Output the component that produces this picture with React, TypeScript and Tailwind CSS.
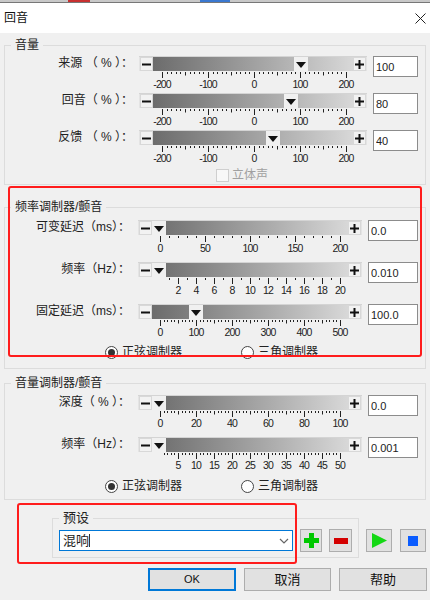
const fontStack = "font-['Liberation_Sans','Noto_Sans_CJK_SC',sans-serif]";

type RulerType = {
  x: number;
  gap: number;
  n: number;
  every: number;
  phase?: number;
  mid?: number;
  labels: string[];
  labelLeft: number;
  labelWidth: number;
};

function Ruler({ x, gap, n, every, phase = 0, mid, labels, labelLeft, labelWidth }: RulerType) {
  const ticks = [];
  for (let i = 0; i <= n; i++) {
    const major = i % every === phase;
    const medium = mid !== undefined && i % every === mid;
    const px = Math.round(x + i * gap) + 0.5;
    ticks.push(
      <line key={i} x1={px} x2={px} y1={0} y2={major ? 6 : medium ? 3.5 : 2} stroke="#222" strokeWidth="1" />
    );
  }

  return (
    <div>
      <svg className="block mt-[1px]" width="230" height="6">
        {ticks}
      </svg>
      <div
        className="flex justify-between text-[10.5px] leading-[12px] tracking-[-0.9px] text-[#222]"
        style={{ marginLeft: labelLeft, width: labelWidth }}
      >
        {labels.map((label) => (
          <span key={label} className="w-0 flex justify-center whitespace-nowrap">
            {label}
          </span>
        ))}
      </div>
    </div>
  );
}

function SliderButton({ plus }: { plus?: boolean }) {
  return (
    <div className="w-[13px] h-[14px] bg-[#f2f2f2] border border-[#d8d8d8] flex items-center justify-center shrink-0">
      <svg width="9" height="9" viewBox="0 0 9 9">
        <rect x="0" y="3.5" width="9" height="2" fill="#111" />
        {plus && <rect x="3.5" y="0" width="2" height="9" fill="#111" />}
      </svg>
    </div>
  );
}

function SliderRow({
  label,
  value,
  thumb,
  ruler,
  rowClass,
  labelClass,
  sliderClass,
  inputClass,
}: {
  label: string;
  value: string;
  thumb: number;
  ruler: RulerType;
  rowClass: string;
  labelClass: string;
  sliderClass: string;
  inputClass: string;
}) {
  return (
    <div className={`flex items-start ${rowClass}`}>
      <div className={`text-right text-[12px] leading-[15px] whitespace-pre text-[#222] shrink-0 ${labelClass}`}>
        {label}
      </div>
      <div className={`shrink-0 ${sliderClass}`}>
        <div className="relative h-[15px] flex items-center px-[1px] bg-[#e4e4e4] border-t border-[#d4d4d4]">
          <SliderButton />
          <div className="h-[14px] flex-1 bg-gradient-to-r from-[#6c6c6c] to-[#d8d8d8]" />
          <SliderButton plus />
          <div
            className="absolute top-0 w-[14px] h-[15px] bg-[#f0f0f0] flex items-center justify-center"
            style={{ left: thumb }}
          >
            <svg width="10" height="6" viewBox="0 0 10 6">
              <path d="M0 0 H10 L5 6 Z" fill="#111" />
            </svg>
          </div>
        </div>
        <Ruler {...ruler} />
      </div>
      <input
        readOnly
        value={value}
        className={`h-[21px] bg-white border border-[#8c8c8c] pl-[2px] text-[11px] text-[#222] outline-none shrink-0 ${inputClass}`}
      />
    </div>
  );
}

function Radio({ checked, text, className }: { checked?: boolean; text: string; className: string }) {
  return (
    <div className={`flex items-center gap-[4px] text-[12px] leading-[13px] text-[#222] ${className}`}>
      <span className="w-[13px] h-[13px] rounded-full border border-[#444] bg-white flex items-center justify-center shrink-0">
        {checked && <span className="w-[7px] h-[7px] rounded-full bg-[#333]" />}
      </span>
      {text}
    </div>
  );
}

function Group({ title, className, children }: { title: string; className: string; children: React.ReactNode }) {
  return (
    <fieldset className={`border border-[#dcdcdc] min-w-0 ${className}`}>
      <legend className="ml-[6px] px-[4px] text-[12px] leading-[18px] text-[#222]">{title}</legend>
      {children}
    </fieldset>
  );
}

function IconButton({ className, children }: { className: string; children: React.ReactNode }) {
  return (
    <div className={`h-[23px] bg-[#e1e1e1] border border-[#adadad] flex items-center justify-center shrink-0 ${className}`}>
      {children}
    </div>
  );
}

const percentLabels = ["-200", "-100", "0", "100", "200"];
const volumeRuler: RulerType = { x: 23, gap: 4.6, n: 40, every: 10, mid: 5, labels: percentLabels, labelLeft: 23, labelWidth: 184 };

export default function App() {
  return (
    <div className={`relative w-[430px] h-[600px] overflow-hidden bg-[#f0f0f0] ${fontStack}`}>
      {/* Window behind the dialog */}
      <div className="flex h-[3px] bg-[#c8c8c8] border-b border-[#777]">
        <div className="ml-[68px] w-[22px] bg-[#c83030]" />
        <div className="ml-[110px] w-[30px] bg-[#3a78d0]" />
      </div>

      {/* Title bar */}
      <div className="h-[30px] bg-white flex items-center justify-between pl-[4px] pr-[4px]">
        <span className="text-[12px] text-[#111]">回音</span>
        <svg width="11" height="11" viewBox="0 0 11 11">
          <path d="M0.5 0.5 L10.5 10.5 M10.5 0.5 L0.5 10.5" stroke="#222" strokeWidth="1" />
        </svg>
      </div>

      <div className="px-[4px] pt-[3px]">
        <Group title="音量" className="pt-[2px] pb-[2px]">
          <SliderRow label="来源 （ % ）：" value="100" thumb={155} ruler={volumeRuler} rowClass="h-[37px]" labelClass="w-[134px] pr-[6px]" sliderClass="w-[228px] mr-[6px]" inputClass="w-[45px]" />
          <SliderRow label="回音（ % ）：" value="80" thumb={145} ruler={volumeRuler} rowClass="h-[37px]" labelClass="w-[134px] pr-[6px]" sliderClass="w-[228px] mr-[6px]" inputClass="w-[45px]" />
          <SliderRow label="反馈 （ % ）：" value="40" thumb={127} ruler={volumeRuler} rowClass="h-[37px]" labelClass="w-[134px] pr-[6px]" sliderClass="w-[228px] mr-[6px]" inputClass="w-[45px]" />
          <div className="flex items-center gap-[3px] ml-[211px] mt-[2px] text-[12px] leading-[13px] text-[#a0a0a0]">
            <span className="w-[13px] h-[13px] bg-[#f8f8f8] border border-[#cfcfcf]" />
            立体声
          </div>
        </Group>

        <Group title="频率调制器/颤音" className="mt-[13px] pt-[4px] pb-[9px]">
          <SliderRow
            label="可变延迟（ms）："
            value="0.0"
            thumb={14}
            ruler={{ x: 22, gap: 9, n: 20, every: 5, labels: ["0", "50", "100", "150", "200"], labelLeft: 22, labelWidth: 180 }}
            rowClass="h-[42px]"
            labelClass="w-[133px] pr-[8px]"
            sliderClass="w-[224px] mr-[6px]"
            inputClass="w-[50px]"
          />
          <SliderRow
            label="频率（Hz）："
            value="0.010"
            thumb={14}
            ruler={{ x: 31, gap: 9, n: 19, every: 2, phase: 1, labels: ["2", "4", "6", "8", "10", "12", "14", "16", "18", "20"], labelLeft: 40, labelWidth: 162 }}
            rowClass="h-[42px]"
            labelClass="w-[133px] pr-[8px]"
            sliderClass="w-[224px] mr-[6px]"
            inputClass="w-[50px]"
          />
          <SliderRow
            label="固定延迟（ms）："
            value="100.0"
            thumb={51}
            ruler={{ x: 22, gap: 3.6, n: 50, every: 10, mid: 5, labels: ["0", "100", "200", "300", "400", "500"], labelLeft: 22, labelWidth: 180 }}
            rowClass="h-[42px]"
            labelClass="w-[133px] pr-[8px]"
            sliderClass="w-[224px] mr-[6px]"
            inputClass="w-[50px]"
          />
          <div className="flex">
            <Radio checked text="正弦调制器" className="ml-[100px] w-[136px]" />
            <Radio text="三角调制器" className="" />
          </div>
        </Group>

        <Group title="音量调制器/颤音" className="mt-[5px] pt-[3px] pb-[6px]">
          <SliderRow
            label="深度（ % ）："
            value="0.0"
            thumb={14}
            ruler={{ x: 22, gap: 3.6, n: 50, every: 10, mid: 5, labels: ["0", "20", "40", "60", "80", "100"], labelLeft: 22, labelWidth: 180 }}
            rowClass="h-[42px]"
            labelClass="w-[133px] pr-[8px]"
            sliderClass="w-[224px] mr-[6px]"
            inputClass="w-[50px]"
          />
          <SliderRow
            label="频率（Hz）："
            value="0.001"
            thumb={14}
            ruler={{ x: 25.6, gap: 3.6, n: 49, every: 5, phase: 4, labels: ["5", "10", "15", "20", "25", "30", "35", "40", "45", "50"], labelLeft: 40, labelWidth: 162 }}
            rowClass="h-[42px]"
            labelClass="w-[133px] pr-[8px]"
            sliderClass="w-[224px] mr-[6px]"
            inputClass="w-[50px]"
          />
          <div className="flex mt-[1px]">
            <Radio checked text="正弦调制器" className="ml-[100px] w-[136px]" />
            <Radio text="三角调制器" className="" />
          </div>
        </Group>

        {/* Presets */}
        <div className="flex items-start mt-[9px] pl-[48px]">
          <fieldset className="w-[308px] border border-[#dcdcdc] min-w-0 px-[6px] pt-[2px] pb-[5px]">
            <legend className="ml-[0px] px-[4px] text-[13px] leading-[18px] text-[#222]">预设</legend>
            <div className="flex items-center">
              <div className="w-[234px] h-[21px] bg-white border border-[#0078d7] flex items-center justify-between pl-[3px] pr-[3px] text-[13px] text-[#222]">
                <span className="flex items-center">
                  混响
                  <span className="w-[1px] h-[13px] bg-[#333]" />
                </span>
                <svg width="10" height="6" viewBox="0 0 10 6">
                  <path d="M1 1 L5 5 L9 1" fill="none" stroke="#666" strokeWidth="1.2" />
                </svg>
              </div>
              <IconButton className="w-[22px] ml-[7px]">
                <svg width="15" height="15" viewBox="0 0 15 15">
                  <path d="M5 0 H10 V5 H15 V10 H10 V15 H5 V10 H0 V5 H5 Z" fill="#00c800" />
                </svg>
              </IconButton>
              <IconButton className="w-[23px] ml-[7px]">
                <svg width="14" height="6" viewBox="0 0 14 6">
                  <rect width="14" height="6" fill="#d40000" />
                </svg>
              </IconButton>
            </div>
          </fieldset>
          <IconButton className="w-[26px] ml-[7px] mt-[20px]">
            <svg width="15" height="15" viewBox="0 0 15 15">
              <path d="M0 0 L15 7.5 L0 15 Z" fill="#14d814" />
            </svg>
          </IconButton>
          <IconButton className="w-[26px] ml-[8px] mt-[20px]">
            <svg width="10" height="10" viewBox="0 0 10 10">
              <rect width="10" height="10" fill="#0a5cff" />
            </svg>
          </IconButton>
        </div>

        {/* Dialog buttons */}
        <div className="flex justify-end gap-[8px] mt-[10px] -mr-px">
          <button className="w-[88px] h-[23px] bg-[#e1e1e1] border-2 border-[#0078d7] text-[11px] text-[#111]">OK</button>
          <button className="w-[87px] h-[23px] bg-[#e1e1e1] border border-[#adadad] text-[13px] text-[#111]">取消</button>
          <button className="w-[88px] h-[23px] bg-[#e1e1e1] border border-[#adadad] text-[13px] text-[#111]">帮助</button>
        </div>
      </div>

      {/* Red annotation boxes drawn over the dialog */}
      <div className="absolute left-[8px] top-[186px] w-[414px] h-[171px] border-[2px] border-[#ff1c1c] rounded-[3px]" />
      <div className="absolute left-[17px] top-[503px] w-[280px] h-[61px] border-[2px] border-[#ff1c1c] rounded-[3px]" />
    </div>
  );
}
